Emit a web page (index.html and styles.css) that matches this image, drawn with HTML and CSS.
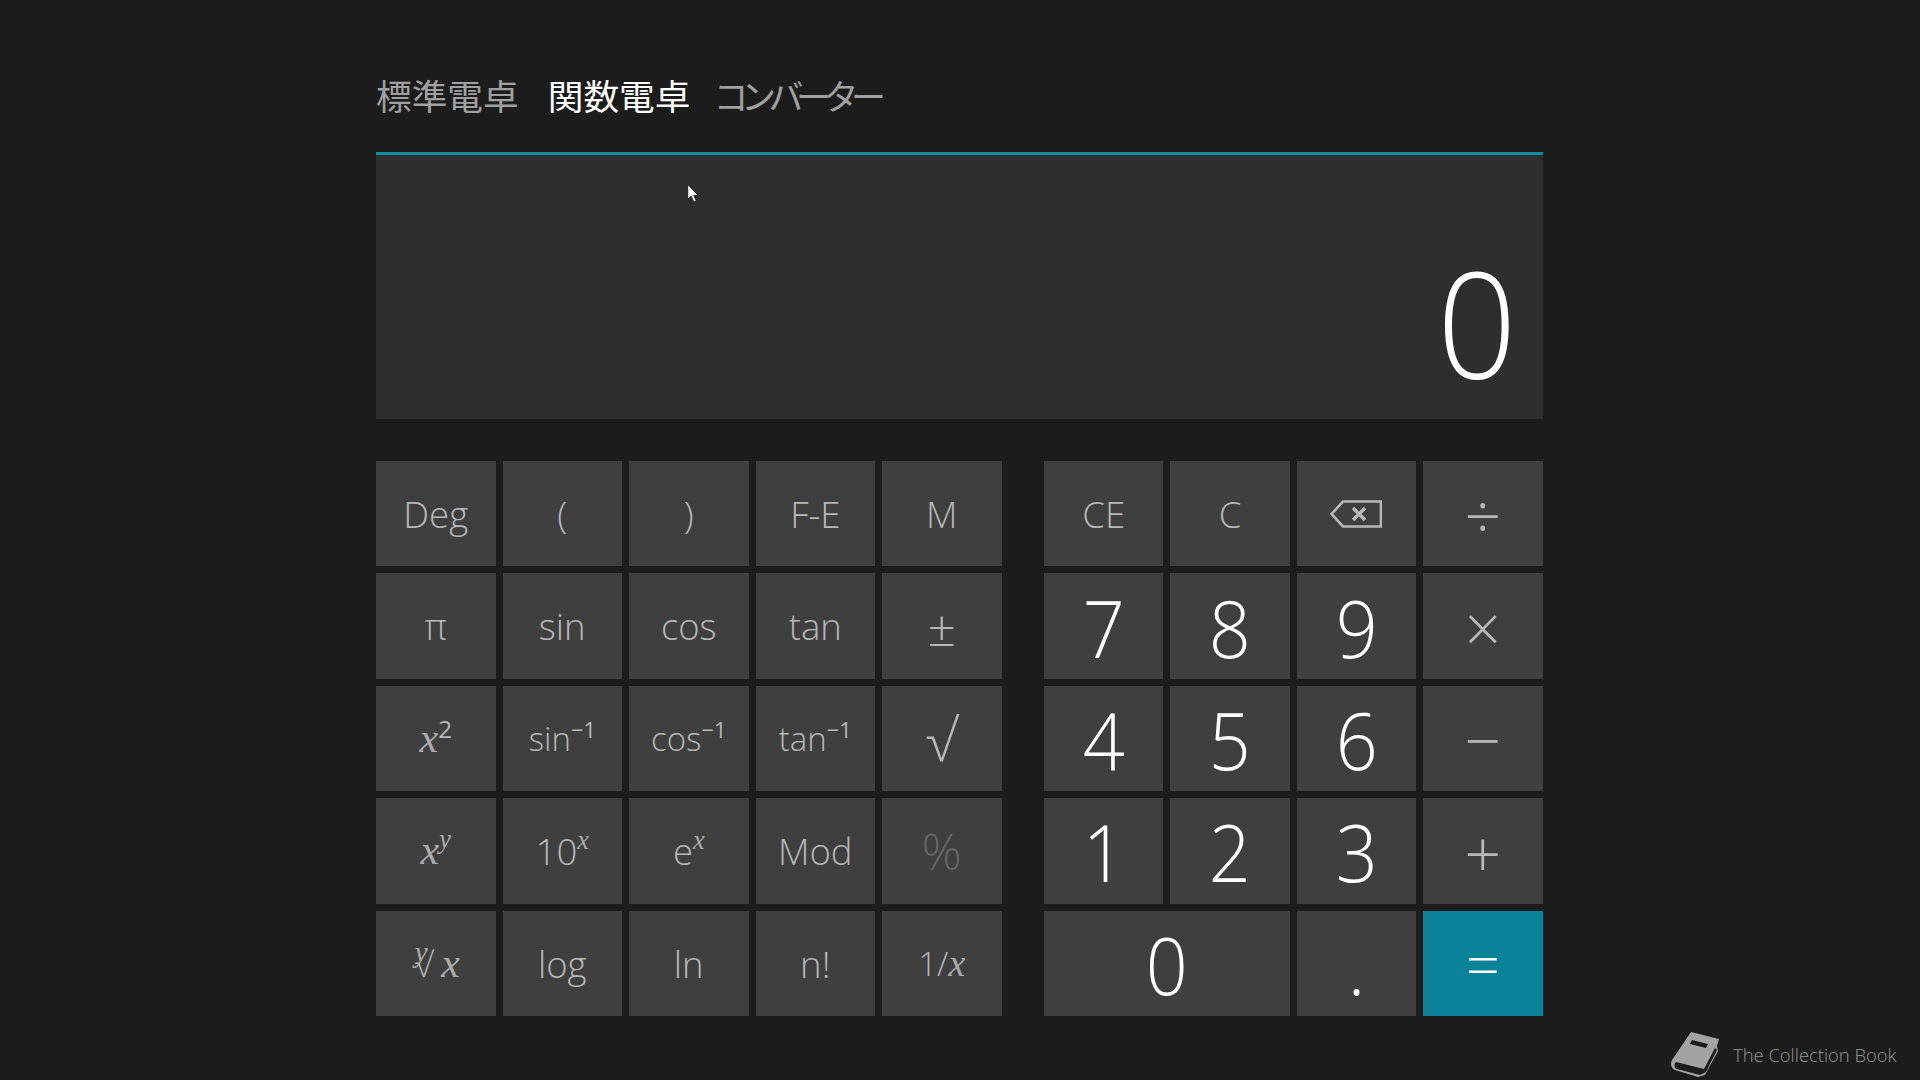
FILE: index.html
```html
<!DOCTYPE html>
<html lang="ja">
<head>
<meta charset="utf-8">
<title>電卓</title>
<link rel="stylesheet" href="styles.css">
</head>
<body>
<main class="calc">
  <nav class="tabs">
    <span class="tab">標準電卓</span>
    <span class="tab active">関数電卓</span>
    <span class="tab kana">コンバーター</span>
  </nav>
  <section class="display"><span class="value">0</span></section>
  <section class="pads">
    <div class="pad sci">
      <div class="key">Deg</div><div class="key">(</div><div class="key">)</div><div class="key">F-E</div><div class="key">M</div>
      <div class="key">π</div><div class="key">sin</div><div class="key">cos</div><div class="key">tan</div><div class="key big">±</div>
      <div class="key"><span><i class="m">x</i><sup class="s">2</sup></span></div><div class="key small"><span>sin<sup class="s">−1</sup></span></div><div class="key small"><span>cos<sup class="s">−1</sup></span></div><div class="key small"><span>tan<sup class="s">−1</sup></span></div><div class="key tall">√</div>
      <div class="key"><span><i class="m">x</i><sup class="s m">y</sup></span></div><div class="key"><span>10<sup class="s m">x</sup></span></div><div class="key"><span>e<sup class="s m">x</sup></span></div><div class="key">Mod</div><div class="key big off">%</div>
      <div class="key"><span class="root"><sup class="rooty m">y</sup><span class="radical">√</span><i class="m">x</i></span></div><div class="key">log</div><div class="key">ln</div><div class="key">n!</div><div class="key small"><span>1/<i class="m">x</i></span></div>
    </div>
    <div class="pad nums">
      <div class="key">CE</div><div class="key">C</div>
      <div class="key"><svg class="back" viewBox="0 0 52 28" aria-label="backspace"><path d="M51 1.500H13L1.500 14 13 26.500H51Z" fill="none" stroke="currentColor" stroke-width="2.600"/><path d="M23 8l12 12M35 8L23 20" fill="none" stroke="currentColor" stroke-width="3.400"/></svg></div>
      <div class="key op">÷</div>
      <div class="key num"><span class="d">7</span></div><div class="key num"><span class="d">8</span></div><div class="key num"><span class="d">9</span></div><div class="key op">×</div>
      <div class="key num"><span class="d">4</span></div><div class="key num"><span class="d">5</span></div><div class="key num"><span class="d">6</span></div><div class="key op">−</div>
      <div class="key num"><span class="d">1</span></div><div class="key num"><span class="d">2</span></div><div class="key num"><span class="d">3</span></div><div class="key op">+</div>
      <div class="key num wide"><span class="d">0</span></div><div class="key num"><span class="d">.</span></div><div class="key eq">=</div>
    </div>
  </section>
</main>
<svg class="cursor" viewBox="0 0 11 18"><path d="M.5.500V14.500L3.800 11.500 6.300 17.200 8.700 16.100 6.200 10.800H10.500Z" fill="#fff" stroke="#111" stroke-width=".8"/></svg>
<aside class="mark">
  <svg class="book" viewBox="0 0 50 46"><path d="M21 1 49 8 47 15 48 20 35 44 28 46 5 39C1 37 0 33 2 29Z" fill="#a3a3a3"/><path d="M6 31 34 38 45 17 47 19 36 41 30 44 7 38C4 37 4 33 6 31Z" fill="#1c1c1c"/><path d="M22 9l16 4-2 4-16-4Z" fill="#1c1c1c"/></svg>
  <span>The Collection Book</span>
</aside>
</body>
</html>
```
FILE: styles.css
```css
* { box-sizing: border-box; }
html, body { margin: 0; height: 100%; overflow: hidden; }
body { background: #1c1c1c; font-family: "Open Sans", "Noto Sans CJK JP", sans-serif; }
.calc { width: 1167px; margin-left: 376px; }
.tabs { height: 152px; padding-top: 71px; display: flex; gap: 29px; align-items: flex-start; font-family: "Noto Sans CJK JP", sans-serif; }
.tab { font-size: 35.700px; line-height: 48px; color: #a0a0a0; font-weight: 400; }
.tab.active { color: #fff; }
.tab.kana { font-size: 35px; letter-spacing: -7.500px; margin-left: -6px; }
.display { height: 267px; background: #2e2e2e; border-top: 3px solid #0d8e9c; display: flex; justify-content: flex-end; align-items: flex-end; padding: 0 24px 0 0; }
.value { font-size: 147px; line-height: 222px; height: 208px; font-weight: 300; color: #fff; transform: scaleX(.95); }
.pads { display: flex; gap: 42.500px; margin-top: 42px; }
.pad { display: grid; grid-auto-rows: 105.4px; gap: 7px; grid-template-columns: repeat(var(--cols), var(--col)); }
.sci { --cols: 5; --col: 119.5px; }
.nums { --cols: 4; --col: 119.4px; }
.key { background: #3f3f3f; color: #b8b8b8; display: flex; align-items: center; justify-content: center; font-size: 36.500px; font-weight: 350; line-height: 1; white-space: nowrap; padding-top: 1px; }
.key.small { font-size: 33px; }
.key.big { font-size: 50px; }
.key.tall { font-size: 58px; font-weight: 300; }
.key.off { color: #666; }
.key.num { color: #fff; font-size: 80px; font-weight: 300; }
.key.wide { grid-column: span 2; }
.key.op { font-size: 64px; font-weight: 350; padding-top: 4px; }
.key.eq { background: #0a8298; color: #fff; font-size: 60px; font-weight: 350; padding-top: 2px; }
.d { transform: scaleX(.92); }
.m { font-family: "Liberation Serif", serif; font-style: italic; font-size: 1.150em; font-weight: 300; color: #ababab; }
.s { font-size: 66%; vertical-align: .6em; line-height: 0; font-weight: 400; }
.s.m { font-size: 72%; }
.root { display: inline-flex; align-items: center; gap: 0; }
.rooty { font-size: 29px; line-height: 0; margin-right: -13px; margin-bottom: 24px; margin-left: 3px; }
.radical { font-size: 34px; margin-right: 8px; }
.back { width: 52px; height: 28px; }
.cursor { position: absolute; left: 687px; top: 184px; width: 12px; height: 19px; }
.mark { position: absolute; left: 1670px; top: 1031px; display: flex; align-items: center; gap: 13px; color: #959595; font-size: 18.400px; font-weight: 300; }
.book { width: 50px; height: 46px; }
```
